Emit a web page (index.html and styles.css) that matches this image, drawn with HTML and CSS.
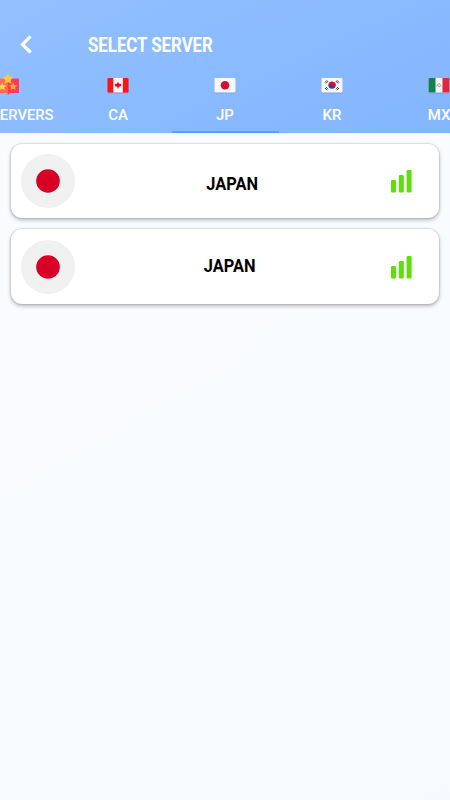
FILE: index.html
```html
<!DOCTYPE html>
<html lang="en">
<head>
    <meta charset="utf-8">
    <title>Select Server</title>
    <link rel="stylesheet" href="styles.css">
</head>
<body>
    <header class="header">
        <div class="toolbar">
            <svg class="back" width="12" height="20" viewBox="0 0 12 20"><path d="M10.600 1.300 2.500 9.400l8.100 8.100" fill="none" stroke="#fff" stroke-width="3.200"/></svg>
            <h1 class="title">SELECT SERVER</h1>
        </div>
        <nav class="tabs">
            <a class="tab all">
                <svg class="flag" width="24" height="24" viewBox="0 0 24 24">
                    <path d="M1 6.500q0-1 1-1h8l2 1.500v15l-2-2H1z" fill="#ff6c52"/>
                    <path d="M12 7l2-1.500h8q1 0 1 1v13.500h-9l-2 2z" fill="#fb3b59"/>
                    <path d="M12 0l1.700 3.500 3.900.6-2.800 2.800.7 3.900-3.500-1.900-3.500 1.900.7-3.900-2.800-2.800 3.900-.6z" fill="#ffc83c"/>
                    <path d="M6.300 9.500l1.200 2.500 2.800.4-2 1.900.5 2.800-2.500-1.300-2.500 1.300.5-2.800-2-1.900 2.800-.4z" fill="#ffd34e"/>
                    <path d="M17.200 9.500l1.200 2.500 2.800.4-2 1.900.5 2.800-2.500-1.300-2.500 1.300.5-2.800-2-1.900 2.800-.4z" fill="#ffa733"/>
                </svg>
                <span>ALL SERVERS</span>
            </a>
            <a class="tab">
                <svg class="flag" width="24" height="24" viewBox="0 0 24 24">
                    <rect x="1.500" y="5.500" width="21" height="15" rx="1" fill="#6a8ac0" opacity=".5"/>
                    <rect x="1.500" y="5" width="21" height="14.500" rx="1" fill="#fa1616"/>
                    <path d="M7.300 5h9.500v14.500H7.300z" fill="#f8f8f8"/>
                    <path d="M12 8.800l1.200 1.900 2.100.3-.3 2-2.300 1.100-.3 1.500h-.8l-.3-1.500L9 13l-.3-2 2.100-.3z" fill="#ec1111"/>
                </svg>
                <span>CA</span>
            </a>
            <a class="tab active">
                <svg class="flag" width="24" height="24" viewBox="0 0 24 24">
                    <rect x="1.500" y="5.500" width="21" height="15" rx="1" fill="#7794c8" opacity=".6"/>
                    <rect x="1.500" y="5" width="21" height="14.500" rx="1" fill="#f7f7f7"/>
                    <circle cx="12" cy="12.200" r="4.300" fill="#d60d30"/>
                </svg>
                <span>JP</span>
            </a>
            <a class="tab">
                <svg class="flag" width="24" height="24" viewBox="0 0 24 24">
                    <rect x="1.500" y="5.500" width="21" height="15" rx="1" fill="#7794c8" opacity=".6"/>
                    <rect x="1.500" y="5" width="21" height="14.500" rx="1" fill="#f7f7f7"/>
                    <circle cx="12" cy="12.200" r="3.500" fill="#1648a8"/>
                    <path d="M8.900 10.600A3.500 3.500 0 0 1 15.200 13.700C14 14.300 12.800 13.500 12 12.400S9.500 11.500 8.900 13.700A3.500 3.500 0 0 1 8.900 10.600z" fill="#e0092e"/>
                    <path d="M5 9.500l2-2.200M6 10.400l2-2.200M16 8.200l2 2.200M17 7.300l2 2.200M5 15l2 2.200M6 14.100l2 2.200M16 16.300l2-2.200M17 17.200l2-2.200" stroke="#444" stroke-width="1"/>
                </svg>
                <span>KR</span>
            </a>
            <a class="tab">
                <svg class="flag" width="24" height="24" viewBox="0 0 24 24">
                    <rect x="1.500" y="5.500" width="21" height="15" rx="1" fill="#6a8ac0" opacity=".5"/>
                    <rect x="1.500" y="5" width="21" height="14.500" rx="1" fill="#f5f5f5"/>
                    <path d="M2.500 5h6v14.500h-6q-1 0-1-1V6q0-1 1-1z" fill="#148052"/>
                    <path d="M15.500 5h6q1 0 1 1v12.500q0 1-1 1h-6z" fill="#e22540"/>
                    <path d="M9.600 13.300q.3-1.500 1.300-1.600l1.200-1.400.9 1.500 1.400 1.600M11 12.500l1.200 1.600 1-1.500" fill="none" stroke="#b0946a" stroke-width="1"/>
                </svg>
                <span>MX</span>
            </a>
        </nav>
    </header>

    <main class="servers">
        <div class="server">
            <svg width="54" height="54" viewBox="0 0 54 54"><circle cx="27" cy="27" r="27" fill="#f0f0f0"/><circle cx="27" cy="27" r="11.800" fill="#d80027"/></svg>
            <span class="name">JAPAN</span>
            <svg class="signal" width="21" height="23" viewBox="0 0 21 23" fill="#5fdd0d"><rect y="10" width="5" height="12.500" rx="1.200"/><rect x="7.800" y="5" width="5" height="17.500" rx="1.200"/><rect x="15.600" width="5" height="22.500" rx="1.200"/></svg>
        </div>
        <div class="server second">
            <svg width="54" height="54" viewBox="0 0 54 54"><circle cx="27" cy="27" r="27" fill="#f0f0f0"/><circle cx="27" cy="27" r="11.800" fill="#d80027"/></svg>
            <span class="name">JAPAN</span>
            <svg class="signal" width="21" height="23" viewBox="0 0 21 23" fill="#5fdd0d"><rect y="10" width="5" height="12.500" rx="1.200"/><rect x="7.800" y="5" width="5" height="17.500" rx="1.200"/><rect x="15.600" width="5" height="22.500" rx="1.200"/></svg>
        </div>
    </main>
</body>
</html>
```
FILE: styles.css
```css
* {
    box-sizing: border-box;
}
body {
    margin: 0;
    height: 800px;
    overflow: hidden;
    font-family: Roboto, sans-serif;
    background: linear-gradient(150deg, #fafbff 0%, #f8fbff 50%, #f6faff 100%);
}

/* --- Header --- */
.header {
    height: 133px;
    padding-top: 24px;
    color: #fff;
    background: linear-gradient(155deg, #92c0ff, #83b5ff);
}
.toolbar {
    display: flex;
    align-items: center;
    height: 41px;
    padding-left: 20px;
}
.title {
    margin: 0 0 0 56px;
    font-size: 20px;
    font-weight: 700;
    line-height: 24px;
    transform: scaleX(0.84); /* condensed lettering */
    transform-origin: left;
}
/* Scrolled sideways so the selected tab sits in the middle */
.tabs {
    display: flex;
    height: 68px;
    margin-left: -49.500px;
    overflow: hidden;
}
.tab {
    display: flex;
    flex: 0 0 107px;
    flex-direction: column;
    align-items: center;
    padding-top: 8px;
    font-size: 15px;
    font-weight: 500;
    line-height: 18px;
    white-space: nowrap;
}
.all {
    flex-basis: 114px;
    font-size: 14.8px;
}
.flag {
    margin-bottom: 9px;
}
.active {
    border-bottom: 2px solid #57a1fc;
}

/* --- Server list --- */
.servers {
    display: flex;
    flex-direction: column;
    gap: 11px;
    padding: 10.700px 11px;
}
.server {
    display: flex;
    align-items: center;
    justify-content: space-between;
    height: 74.700px;
    padding: 0 26.500px 0 10px;
    border-radius: 11px;
    background: #fff;
    box-shadow: 0 0 1px 1px rgba(0, 0, 0, 0.09), 0 2px 4px rgba(0, 0, 0, 0.27);
}
.name {
    padding: 5px 2px 0 0;
    font-size: 19px;
    font-weight: 700;
    line-height: 24px;
    transform: scaleX(0.86);
}
.signal {
    margin-right: 0.5px;
}
.second {
    padding-top: 1px;
}
.second .name {
    padding: 0 8px 3px 0;
}
```
